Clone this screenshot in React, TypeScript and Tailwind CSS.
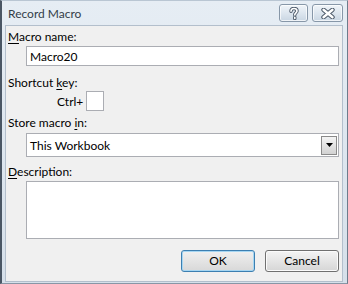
const font = { fontFamily: 'Lato, "Noto Sans", sans-serif' };

const HelpGlyph = () => (
  <svg width="12" height="13" viewBox="0 0 12 13">
    <path
      d="M3 4.2C3 2.4 4.3 1.5 6 1.5S9 2.5 9 4c0 1.6-2.2 2-2.2 3.6V8M6.8 10.2v1.3"
      fill="none"
      stroke="#4b5868"
      strokeWidth="3.4"
      strokeLinecap="round"
    />
    <path
      d="M3 4.2C3 2.4 4.3 1.5 6 1.5S9 2.5 9 4c0 1.6-2.2 2-2.2 3.6V8M6.8 10.2v1.3"
      fill="none"
      stroke="#fff"
      strokeWidth="1.6"
      strokeLinecap="round"
    />
  </svg>
);

const CloseGlyph = () => (
  <svg width="14" height="11" viewBox="0 0 14 11">
    <path d="M2.5 1.8l9 7.4M11.5 1.8l-9 7.4" stroke="#4b5868" strokeWidth="4.4" strokeLinecap="round" />
    <path d="M2.5 1.8l9 7.4M11.5 1.8l-9 7.4" stroke="#fff" strokeWidth="2.4" strokeLinecap="round" />
  </svg>
);

const TitleButton = ({ children, w }: { children: React.ReactNode; w: string }) => (
  <div
    className={`${w} h-[18px] flex items-center justify-center rounded-[3px] border border-[#8797a8] bg-gradient-to-b from-[#f0f4f8] via-[#dde6ef] to-[#c9d6e3] shadow-[inset_0_0_0_1px_rgba(255,255,255,0.7)]`}
  >
    {children}
  </div>
);

const Label = ({ before, accel, after }: { before?: string; accel: string; after?: string }) => (
  <div className="text-[12px] leading-[15px] text-black">
    {before}
    <span className="underline underline-offset-2">{accel}</span>
    {after}
  </div>
);

export default function App() {
  return (
    <div
      style={font}
      className="w-[348px] h-[284px] bg-gradient-to-b from-[#e6edf4] to-[#d6e0ea] border-l-2 border-r border-t border-b border-l-[#4a5664] border-r-[#6d7c8c] border-t-[#b9c6d3] border-b-[#8896a5] flex flex-col overflow-hidden"
    >
      <div className="h-[24px] flex items-start justify-between pl-[6px] pr-[4px] pt-[3px]">
        <span className="text-[12px] leading-[15px] mt-[2px] text-[#333d48]">Record Macro</span>
        <div className="flex gap-[4px]">
          <TitleButton w="w-[29px]">
            <HelpGlyph />
          </TitleButton>
          <TitleButton w="w-[31px]">
            <CloseGlyph />
          </TitleButton>
        </div>
      </div>
      <div className="h-[257px] ml-[3px] mr-[4px] border border-[#b3bfcc] bg-[#f0f0f0] pl-[2px] pr-[3px] pt-[3px] flex flex-col">
        <Label accel="M" after="acro name:" />
        <div className="ml-[18px] mt-[2px] h-[20px] bg-white border border-[#abadb3] flex items-center px-[3px] text-[12px] leading-[15px]">
          Macro20
        </div>
        <div className="mt-[9px]">
          <Label before="Shortcut " accel="k" after="ey:" />
        </div>
        <div className="flex items-center ml-[49px] mt-[1px]">
          <span className="text-[12px] leading-[15px] mr-[3px]">Ctrl+</span>
          <div className="w-[18px] h-[20px] bg-white border border-[#abadb3]" />
        </div>
        <div className="mt-[4px]">
          <Label before="Store macro " accel="i" after="n:" />
        </div>
        <div className="ml-[18px] mt-[3px] h-[24px] bg-white border border-[#abadb3] flex items-center justify-between pl-[3px] pr-[1px] text-[12px] leading-[15px]">
          <span>This Workbook</span>
          <div className="w-[16px] h-[19px] border border-[#8a8a8a] bg-gradient-to-b from-[#f4f4f4] to-[#d2d2d2] flex items-center justify-center">
            <svg width="7" height="4" viewBox="0 0 7 4">
              <path d="M0 0h7L3.5 4z" fill="#000" />
            </svg>
          </div>
        </div>
        <div className="mt-[7px]">
          <Label accel="D" after="escription:" />
        </div>
        <div className="ml-[18px] mt-[2px] h-[58px] bg-white border border-[#abadb3]" />
        <div className="flex justify-end gap-[10px] mt-[11px]">
          <button className="w-[74px] h-[22px] rounded-[3px] border border-[#3c7fb1] bg-gradient-to-b from-[#f0f0f0] to-[#d8d8d8] text-[12px] shadow-[inset_0_0_0_1px_#a6d6f2]">
            OK
          </button>
          <button className="w-[74px] h-[22px] rounded-[3px] border border-[#707070] bg-gradient-to-b from-[#f4f4f4] to-[#d6d6d6] text-[12px] shadow-[inset_0_0_0_1px_#fbfbfb]">
            Cancel
          </button>
        </div>
      </div>
    </div>
  );
}
